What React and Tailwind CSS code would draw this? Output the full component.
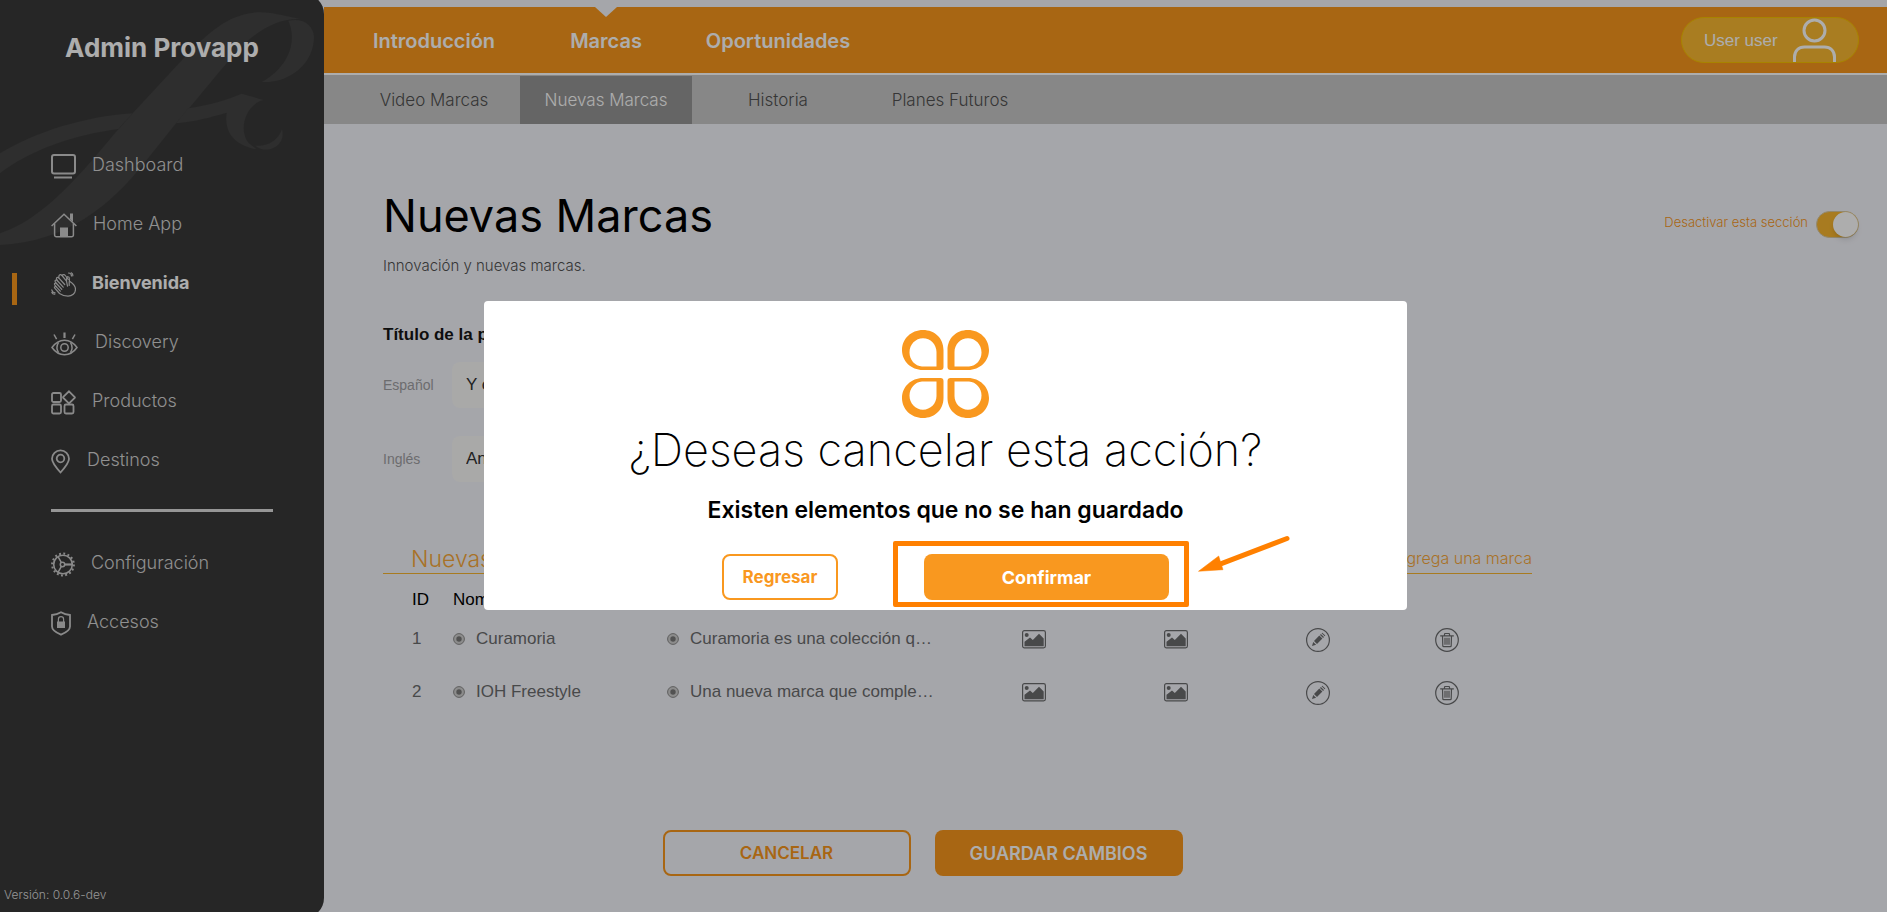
import React from "react";

const iconProps = {
  fill: "none",
  stroke: "currentColor",
  strokeWidth: 2,
  "aria-hidden": true,
  className: "shrink-0",
};

function DashboardIcon() {
  return (
    <svg width="25" height="25" viewBox="0 0 25 25" {...iconProps}>
      <rect x="1" y="1" width="23" height="18.5" rx="2" />
      <path d="M3 23.5h18" />
    </svg>
  );
}

function HomeIcon() {
  return (
    <svg width="26" height="25" viewBox="0 0 26 25" {...iconProps} strokeWidth="1.5">
      <path d="M.6 13 13 1.2 25.4 13" />
      <path d="M3.6 10.500V22a1.800 1.800 0 0 0 1.800 1.800h15.200a1.800 1.800 0 0 0 1.800-1.800V10.500" />
      <path d="M19 .5h3v8.500l-3-3z" fill="currentColor" stroke="none" />
      <path d="M9 14.500h8V24H9z" fill="currentColor" stroke="none" />
    </svg>
  );
}

function ClapIcon() {
  return (
    <svg width="25" height="25" viewBox="0 0 25 25" {...iconProps} strokeWidth="1.2" strokeLinecap="round" strokeLinejoin="round">
      <path d="M8.500 21.500 3.800 16.200c-.9-1 .5-2.300 1.500-1.400l-1.500-1.900c-.9-1.200.7-2.500 1.700-1.400L4.300 9.800c-.8-1.300.9-2.500 1.900-1.300L5.600 7c-.5-1.400 1.200-2.200 2.100-1.100L8 3.800c.5-1.500 2-1.500 3-.3l4.500 5.600.3-3.300c.2-1.500 2.300-1.400 2.400.1l.3 3.300c4 2.500 6 4.600 6 8 0 4.200-3.500 7-7.500 7-3.500 0-6-1-8.500-2.700z" />
      <path d="M5.300 14.800l4 4.400M5.500 11.500l5.300 5.800M6.200 8.500l6 6.700M7.700 5.900l6 6.600" />
      <path d="M11 3.500c1-1.500 2.500-1 3.300 0l3 4M15.500 9.100l1 5M18.200 9.500v4" />
      <path d="M17.500 1c2 0 3 1.200 3 3M20.300.8c1.200.5 1.700 1.400 1.500 3M.8 17.800c.2 2 1.300 3 3.300 3M.8 20.600c.6 1.200 1.600 1.800 3 1.600" />
    </svg>
  );
}

function EyeIcon() {
  return (
    <svg width="28" height="24" viewBox="0 0 28 24" {...iconProps} strokeWidth="1.5">
      <path d="M1 15.500C4.500 10.500 8.500 8.200 13.500 8.200S22.500 10.500 26 15.500c-3.500 5-7.500 7.200-12.500 7.200S4.500 20.500 1 15.500z" />
      <circle cx="13.500" cy="15.500" r="3.700" />
      <path d="M7.500 10.300c-2 3.400-2 7 0 10.400M19.500 10.300c2 3.400 2 7 0 10.400" />
      <path d="M13.500.5v5.500" strokeWidth="2.200" />
      <path d="M3 2.500l2.600 4.700M24 2.500l-2.600 4.700" />
    </svg>
  );
}

function ProductsIcon() {
  return (
    <svg width="25" height="25" viewBox="0 0 25 25" {...iconProps} strokeWidth="1.8">
      <rect x="1" y="3" width="9" height="9" rx="1.500" />
      <rect x="1" y="14.500" width="9" height="9" rx="1.500" />
      <rect x="13.500" y="14.500" width="9" height="9" rx="1.500" />
      <path d="M18 1.300l5.700 5.700a.8.8 0 0 1 0 1L18 13.500l-5.700-5.600a.8.8 0 0 1 0-1z" />
    </svg>
  );
}

function PinIcon() {
  return (
    <svg width="20" height="25" viewBox="0 0 20 25" {...iconProps} strokeWidth="1.8">
      <path d="M9.500 23.500C5 18.500 1 14 1 9.800a8.500 8.500 0 0 1 17 0c0 4.200-4 8.700-8.500 13.700z" />
      <circle cx="9.500" cy="9.500" r="3.800" />
    </svg>
  );
}

function GearIcon() {
  return (
    <svg width="24" height="25" viewBox="0 0 24 25" {...iconProps} strokeWidth="1.600">
      <circle cx="12" cy="12.500" r="9.300" />
      <circle cx="12" cy="12.500" r="10.900" strokeWidth="2" strokeDasharray="1.900 2.380" />
      <circle cx="11.500" cy="12.500" r="2.200" strokeWidth="1.500" />
      <path d="M13.700 12.500h7.500" strokeWidth="2.200" />
      <path d="M10.400 10.600 7 4.700M10.400 14.400 7 20.300" strokeWidth="1.500" />
    </svg>
  );
}

function ShieldIcon() {
  return (
    <svg width="20" height="25" viewBox="0 0 20 25" {...iconProps} strokeWidth="1.800">
      <path d="M10 1.200c3 1.800 6 2.600 9 2.800v11.500c0 3.500-4.500 6.300-9 8.200-4.500-1.900-9-4.700-9-8.200V4c3-.2 6-1 9-2.800z" />
      <path d="M6 10.500h8V17H6z" fill="currentColor" stroke="none" />
      <path d="M7.400 11V8.200a2.600 2.600 0 0 1 5.200 0V11" strokeWidth="1.200" />
    </svg>
  );
}

function Watermark() {
  return (
    <svg
      className="absolute top-1.5 left-0 text-[#444444]"
      width="324"
      height="250"
      viewBox="0 0 972 750"
      fill="currentColor"
      aria-hidden="true"
    >
      <path d="M0 735C200 725 330 620 440 480L528 370C600 290 690 170 740 125C790 82 840 55 900 57C830 42 800 33 760 38C680 48 630 95 560 165L398 340L340 405C220 550 120 660 0 700Z" />
      <path d="M865 62C910 52 940 75 942 110C942 190 870 250 785 246C860 205 895 130 865 62Z" />
      <path d="M0 460C110 395 250 350 398 340L355 387C220 405 90 450 0 520Z" />
      <path d="M565 325C630 315 680 300 725 281L790 300C735 315 715 390 745 428L770 448C700 435 672 395 680 338C630 352 590 364 528 370Z" />
      <path d="M766 437C805 440 835 420 846 387C860 440 800 465 766 437Z" />
    </svg>
  );
}

function NavItem({ icon, label, active }) {
  return (
    <li className="relative">
      {active && <span className="absolute top-[18px] -left-[39px] h-8 w-[5px] bg-[#f8971d]" />}
      <a
        href="#"
        aria-current={active ? "page" : undefined}
        className={
          active
            ? "flex h-[59px] items-center gap-4 text-lg font-bold text-white"
            : "flex h-[59px] items-center gap-4 text-lg font-light text-[#d4d4d4]"
        }
      >
        <span className="text-[#cccccc]">{icon}</span>
        <span className="pb-1">{label}</span>
      </a>
    </li>
  );
}

function Sidebar() {
  return (
    <aside className="relative z-10 -mt-1.5 -mb-1.5 flex w-[324px] shrink-0 flex-col overflow-hidden rounded-r-[20px] bg-[#393939] py-1.5">
      <Watermark />
      <h2 className="relative pt-8 text-center text-[26px] leading-8 font-bold text-white">Admin Provapp</h2>
      <nav className="relative mt-[73px] px-[51px]">
        <ul>
          <NavItem icon={<DashboardIcon />} label="Dashboard" />
          <NavItem icon={<HomeIcon />} label="Home App" />
          <NavItem icon={<ClapIcon />} label="Bienvenida" active />
          <NavItem icon={<EyeIcon />} label="Discovery" />
          <NavItem icon={<ProductsIcon />} label="Productos" />
          <NavItem icon={<PinIcon />} label="Destinos" />
        </ul>
        <hr className="mt-[18px] mb-[23px] border-t-[3px] border-[#dedede]" />
        <ul>
          <NavItem icon={<GearIcon />} label="Configuración" />
          <NavItem icon={<ShieldIcon />} label="Accesos" />
        </ul>
      </nav>
      <p className="relative mt-auto pb-[7px] pl-1 text-xs leading-5 font-light text-[#dddddd]">Versión: 0.0.6-dev</p>
    </aside>
  );
}

function Header() {
  return (
    <header className="pt-[7px]">
      <div className="flex h-[66px] items-center justify-between bg-[#f8971d] pr-7 pl-6">
        <nav className="flex h-full">
          <a href="#" className="flex w-[172px] items-center justify-center pt-0.5 text-xl font-semibold text-white">
            Introducción
          </a>
          <a
            href="#"
            aria-current="page"
            className="relative flex w-[172px] items-center justify-center pt-0.5 text-xl font-semibold text-white"
          >
            <svg className="absolute top-0 left-[75px]" width="22" height="10" viewBox="0 0 22 10" aria-hidden="true">
              <path d="M0 0h22L11 10z" fill="#f4f5fb" />
            </svg>
            Marcas
          </a>
          <a href="#" className="flex w-[172px] items-center justify-center pt-0.5 text-xl font-semibold text-white">
            Oportunidades
          </a>
        </nav>
        <button
          type="button"
          className="flex h-[46px] w-[178px] items-center gap-[15px] rounded-full border border-[#f8c200] bg-[#f9b932] pl-[22px] font-['Liberation_Sans',sans-serif] text-[17px] text-white"
        >
          <span className="pt-0.5">User user</span>
          <svg width="43" height="44" viewBox="0 0 43 44" fill="none" stroke="currentColor" strokeWidth="3" aria-hidden="true">
            <circle cx="21.500" cy="12.500" r="10.500" />
            <path d="M1.500 44v-5c0-6 4-10 10-10h20c6 0 10 4 10 10v5" />
          </svg>
        </button>
      </div>
      <nav className="flex h-[51px] border-t-2 border-white bg-[#c8c8c8] pl-6 text-[17px] font-light text-[#505050]">
        <a href="#" className="flex w-[172px] items-center justify-center pt-0.5">
          Video Marcas
        </a>
        <a href="#" aria-current="page" className="mt-px flex w-[172px] items-center justify-center bg-[#969696] pt-px text-white">
          Nuevas Marcas
        </a>
        <a href="#" className="flex w-[172px] items-center justify-center pt-0.5">
          Historia
        </a>
        <a href="#" className="flex w-[172px] items-center justify-center pt-0.5">
          Planes Futuros
        </a>
      </nav>
    </header>
  );
}

function StatusDot() {
  return (
    <svg width="12" height="12" viewBox="0 0 12 12" className="shrink-0" aria-hidden="true">
      <circle cx="6" cy="6" r="5.400" fill="#cfcfcf" stroke="#8c8c8c" />
      <circle cx="6" cy="6" r="2.700" fill="#7a7a7a" />
    </svg>
  );
}

function PictureIcon() {
  return (
    <svg width="24" height="19" viewBox="0 0 24 19" aria-hidden="true">
      <rect x=".6" y=".6" width="22.800" height="17.300" rx="1.800" fill="none" stroke="#6b6c6e" strokeWidth="1.200" />
      <circle cx="4.700" cy="5" r="2" fill="#6b6c6e" />
      <path d="M2.500 16.300v-4.500L8 7.500l2.800 2.500L17 3.800l4.700 4.800v7.700z" fill="#6b6c6e" />
    </svg>
  );
}

function EditIcon() {
  return (
    <svg width="24" height="24" viewBox="0 0 24 24" aria-hidden="true">
      <circle cx="12" cy="12" r="11.400" fill="none" stroke="#6b6c6e" strokeWidth="1.200" />
      <path d="M6 18l1.200-4 2.900 2.800zM8 13l5.300-5.400 3.100 3L11 16zM14 6.900l.9-.9 3.100 3-.9.900zM15.600 5.300l.7-.6 3 2.900-.6.700z" fill="#6b6c6e" />
    </svg>
  );
}

function TrashIcon() {
  return (
    <svg width="24" height="24" viewBox="0 0 24 24" fill="none" stroke="#6b6c6e" strokeWidth="1.200" aria-hidden="true">
      <circle cx="12" cy="12" r="11.300" />
      <path d="M5.200 7.800h13.600M9.500 7.500V6.200c0-.4.300-.7.700-.7h3.600c.4 0 .7.300.7.700v1.300M7.500 8l.3 9.800c0 .5.400.9.900.9h6.600c.5 0 .9-.4.900-.9l.3-9.800M10 9.800v7M12 9.800v7M14 9.800v7" />
    </svg>
  );
}

const brands = [
  { id: 1, name: "Curamoria", description: "Curamoria es una colección q…" },
  { id: 2, name: "IOH Freestyle", description: "Una nueva marca que comple…" },
];

function BrandTable() {
  return (
    <table className="w-full table-fixed font-['Liberation_Sans',sans-serif] text-[17px] leading-6">
      <colgroup>
        <col className="w-[70px]" />
        <col className="w-[214px]" />
        <col />
        <col className="w-[142px]" />
        <col className="w-[142px]" />
        <col className="w-[142px]" />
        <col className="w-[143px]" />
      </colgroup>
      <thead>
        <tr className="h-[38px] text-left text-black">
          <th scope="col" className="pt-3.5 pl-[29px] font-normal">ID</th>
          <th scope="col" className="pt-3.5 font-normal">Nombre</th>
          <td colSpan={5} />
        </tr>
      </thead>
      <tbody>
        {brands.map((brand) => (
          <tr key={brand.id} className="h-[53px] text-[#6b6c6e]">
            <td className="pl-[29px]">{brand.id}</td>
            <td>
              <div className="flex items-center gap-[11px]">
                <StatusDot />
                {brand.name}
              </div>
            </td>
            <td>
              <div className="flex items-center gap-[11px]">
                <StatusDot />
                {brand.description}
              </div>
            </td>
            <td className="pt-0.5">
              <button type="button" aria-label="Ver imagen" className="mx-auto block"><PictureIcon /></button>
            </td>
            <td className="pt-0.5">
              <button type="button" aria-label="Ver logo" className="mx-auto block"><PictureIcon /></button>
            </td>
            <td className="pt-0.5">
              <button type="button" aria-label="Editar" className="mx-auto block"><EditIcon /></button>
            </td>
            <td className="pt-0.5 pr-7">
              <button type="button" aria-label="Eliminar" className="mx-auto block"><TrashIcon /></button>
            </td>
          </tr>
        ))}
      </tbody>
    </table>
  );
}

function TextField({ id, label, value }) {
  return (
    <div className="flex items-center">
      <label htmlFor={id} className="w-[69px] text-sm text-[#a0a0a3]">
        {label}
      </label>
      <input
        id={id}
        type="text"
        defaultValue={value}
        className="h-[46px] flex-1 rounded-lg bg-[#f9f9f8] px-[14px] text-[17px] text-[#333333]"
      />
    </div>
  );
}

function Content() {
  return (
    <main className="pt-[68px] pr-7 pb-9 pl-[59px]">
      <div className="flex h-12 items-end justify-between">
        <h1 className="text-[45px] leading-12 font-normal text-black">Nuevas Marcas</h1>
        <div className="flex items-center gap-2 pb-0.5">
          <label htmlFor="section-enabled" className="pb-1 text-[13px] font-light text-[#f8971d]">
            Desactivar esta sección
          </label>
          <input
            id="section-enabled"
            type="checkbox"
            role="switch"
            defaultChecked
            className="relative h-[27px] w-[43px] appearance-none rounded-full border border-[#d9c9a0] bg-[#f8b630] before:absolute before:top-0 before:right-0 before:size-[25px] before:rounded-full before:bg-white before:shadow-md"
          />
        </div>
      </div>
      <p className="mt-4 text-[15px] leading-5 font-light text-[#505050]">Innovación y nuevas marcas.</p>

      <div className="max-w-[1149px]">
        <section className="mt-[47px] max-w-[940px] font-['Liberation_Sans',sans-serif]">
          <h2 className="text-[17px] leading-6 font-bold text-[#151515]">Título de la página</h2>
          <div className="mt-[15px] flex flex-col gap-7">
            <TextField id="title-es" label="Español" value="Y continuamos" />
            <TextField id="title-en" label="Inglés" value="And we continue" />
          </div>
        </section>

        <section className="mt-[60px]">
          <div className="flex h-8 items-center justify-between border-b border-[#f8b630] pl-7 text-[#f8a83a]">
            <h2 className="pt-1 text-[23px] font-light">Nuevas Marcas</h2>
            <button type="button" className="text-base font-light">Agrega una marca</button>
          </div>
          <BrandTable />
        </section>

        <div className="mt-28 flex justify-center gap-6 pr-[70px]">
          <button type="button" className="h-[46px] w-[248px] rounded-lg border-2 border-[#f8971d] pt-0.5 text-[17px] font-semibold text-[#f8971d]">
            CANCELAR
          </button>
          <button type="button" className="h-[46px] w-[248px] rounded-lg bg-[#f8971d] pt-0.5 text-lg font-semibold text-white">
            GUARDAR CAMBIOS
          </button>
        </div>
      </div>
    </main>
  );
}

const petal =
  "M21 0C33 0 41.500 8.500 41.500 20V37Q41.500 40 38.500 40H21C9 40 0 31 0 20C0 9 9 0 21 0ZM21 8.300C28.500 8.300 34.500 14.500 34.500 22V36.500H20C13 36 7.500 30 7.500 22.500C7.500 14.500 13.500 8.300 21 8.300Z";

function FlowerLogo() {
  return (
    <svg width="87" height="88" viewBox="0 0 87 88" fill="#f9981f" fillRule="evenodd" aria-hidden="true">
      <path d={petal} />
      <path d={petal} transform="translate(87 0) scale(-1 1)" />
      <path d={petal} transform="translate(0 88) scale(1 -1)" />
      <path d={petal} transform="translate(87 88) scale(-1 -1)" />
    </svg>
  );
}

function ConfirmDialog() {
  return (
    <div className="fixed inset-0 z-20 flex items-center justify-center bg-black/32 pb-0.5 pl-1">
      <div
        role="dialog"
        aria-modal="true"
        aria-labelledby="dialog-title"
        className="flex w-[923px] max-w-full flex-col items-center rounded-[4px] bg-white pt-[29px] pb-[10px] text-black"
      >
        <FlowerLogo />
        <h2 id="dialog-title" className="mt-1 text-[45px] leading-14 font-extralight">
          ¿Deseas cancelar esta acción?
        </h2>
        <p className="mt-[18px] text-[23px] leading-7 font-semibold">Existen elementos que no se han guardado</p>
        <div className="mt-[30px] flex gap-[86px]">
          <button type="button" className="h-[46px] w-[116px] rounded-lg border-2 border-[#f9981f] pt-0.5 text-[17px] font-bold text-[#f9981f]">
            Regresar
          </button>
          <div className="relative">
            <button type="button" className="h-[46px] w-[245px] rounded-lg bg-[#f9981f] pt-0.5 text-lg font-bold text-white">
              Confirmar
            </button>
            <div className="pointer-events-none absolute -top-[13px] -right-5 -bottom-[7px] -left-[31px] rounded-xs border-5 border-[#ff8000]" />
            <svg
              className="pointer-events-none absolute -top-5 left-[272px]"
              width="96"
              height="40"
              viewBox="0 0 96 40"
              fill="#ff8000"
              stroke="#ff8000"
              aria-hidden="true"
            >
              <path d="M26 29.300 91 4.500" strokeWidth="5" strokeLinecap="round" />
              <path d="M2.500 37.300 22.700 22l4.300 13.700z" strokeWidth=".5" />
            </svg>
          </div>
        </div>
      </div>
    </div>
  );
}

export default function App() {
  return (
    <div className="flex min-h-screen overflow-hidden bg-[#f4f5fb] font-['Inter',sans-serif]">
      <Sidebar />
      <div className="min-w-0 flex-1">
        <Header />
        <Content />
      </div>
      <ConfirmDialog />
    </div>
  );
}
